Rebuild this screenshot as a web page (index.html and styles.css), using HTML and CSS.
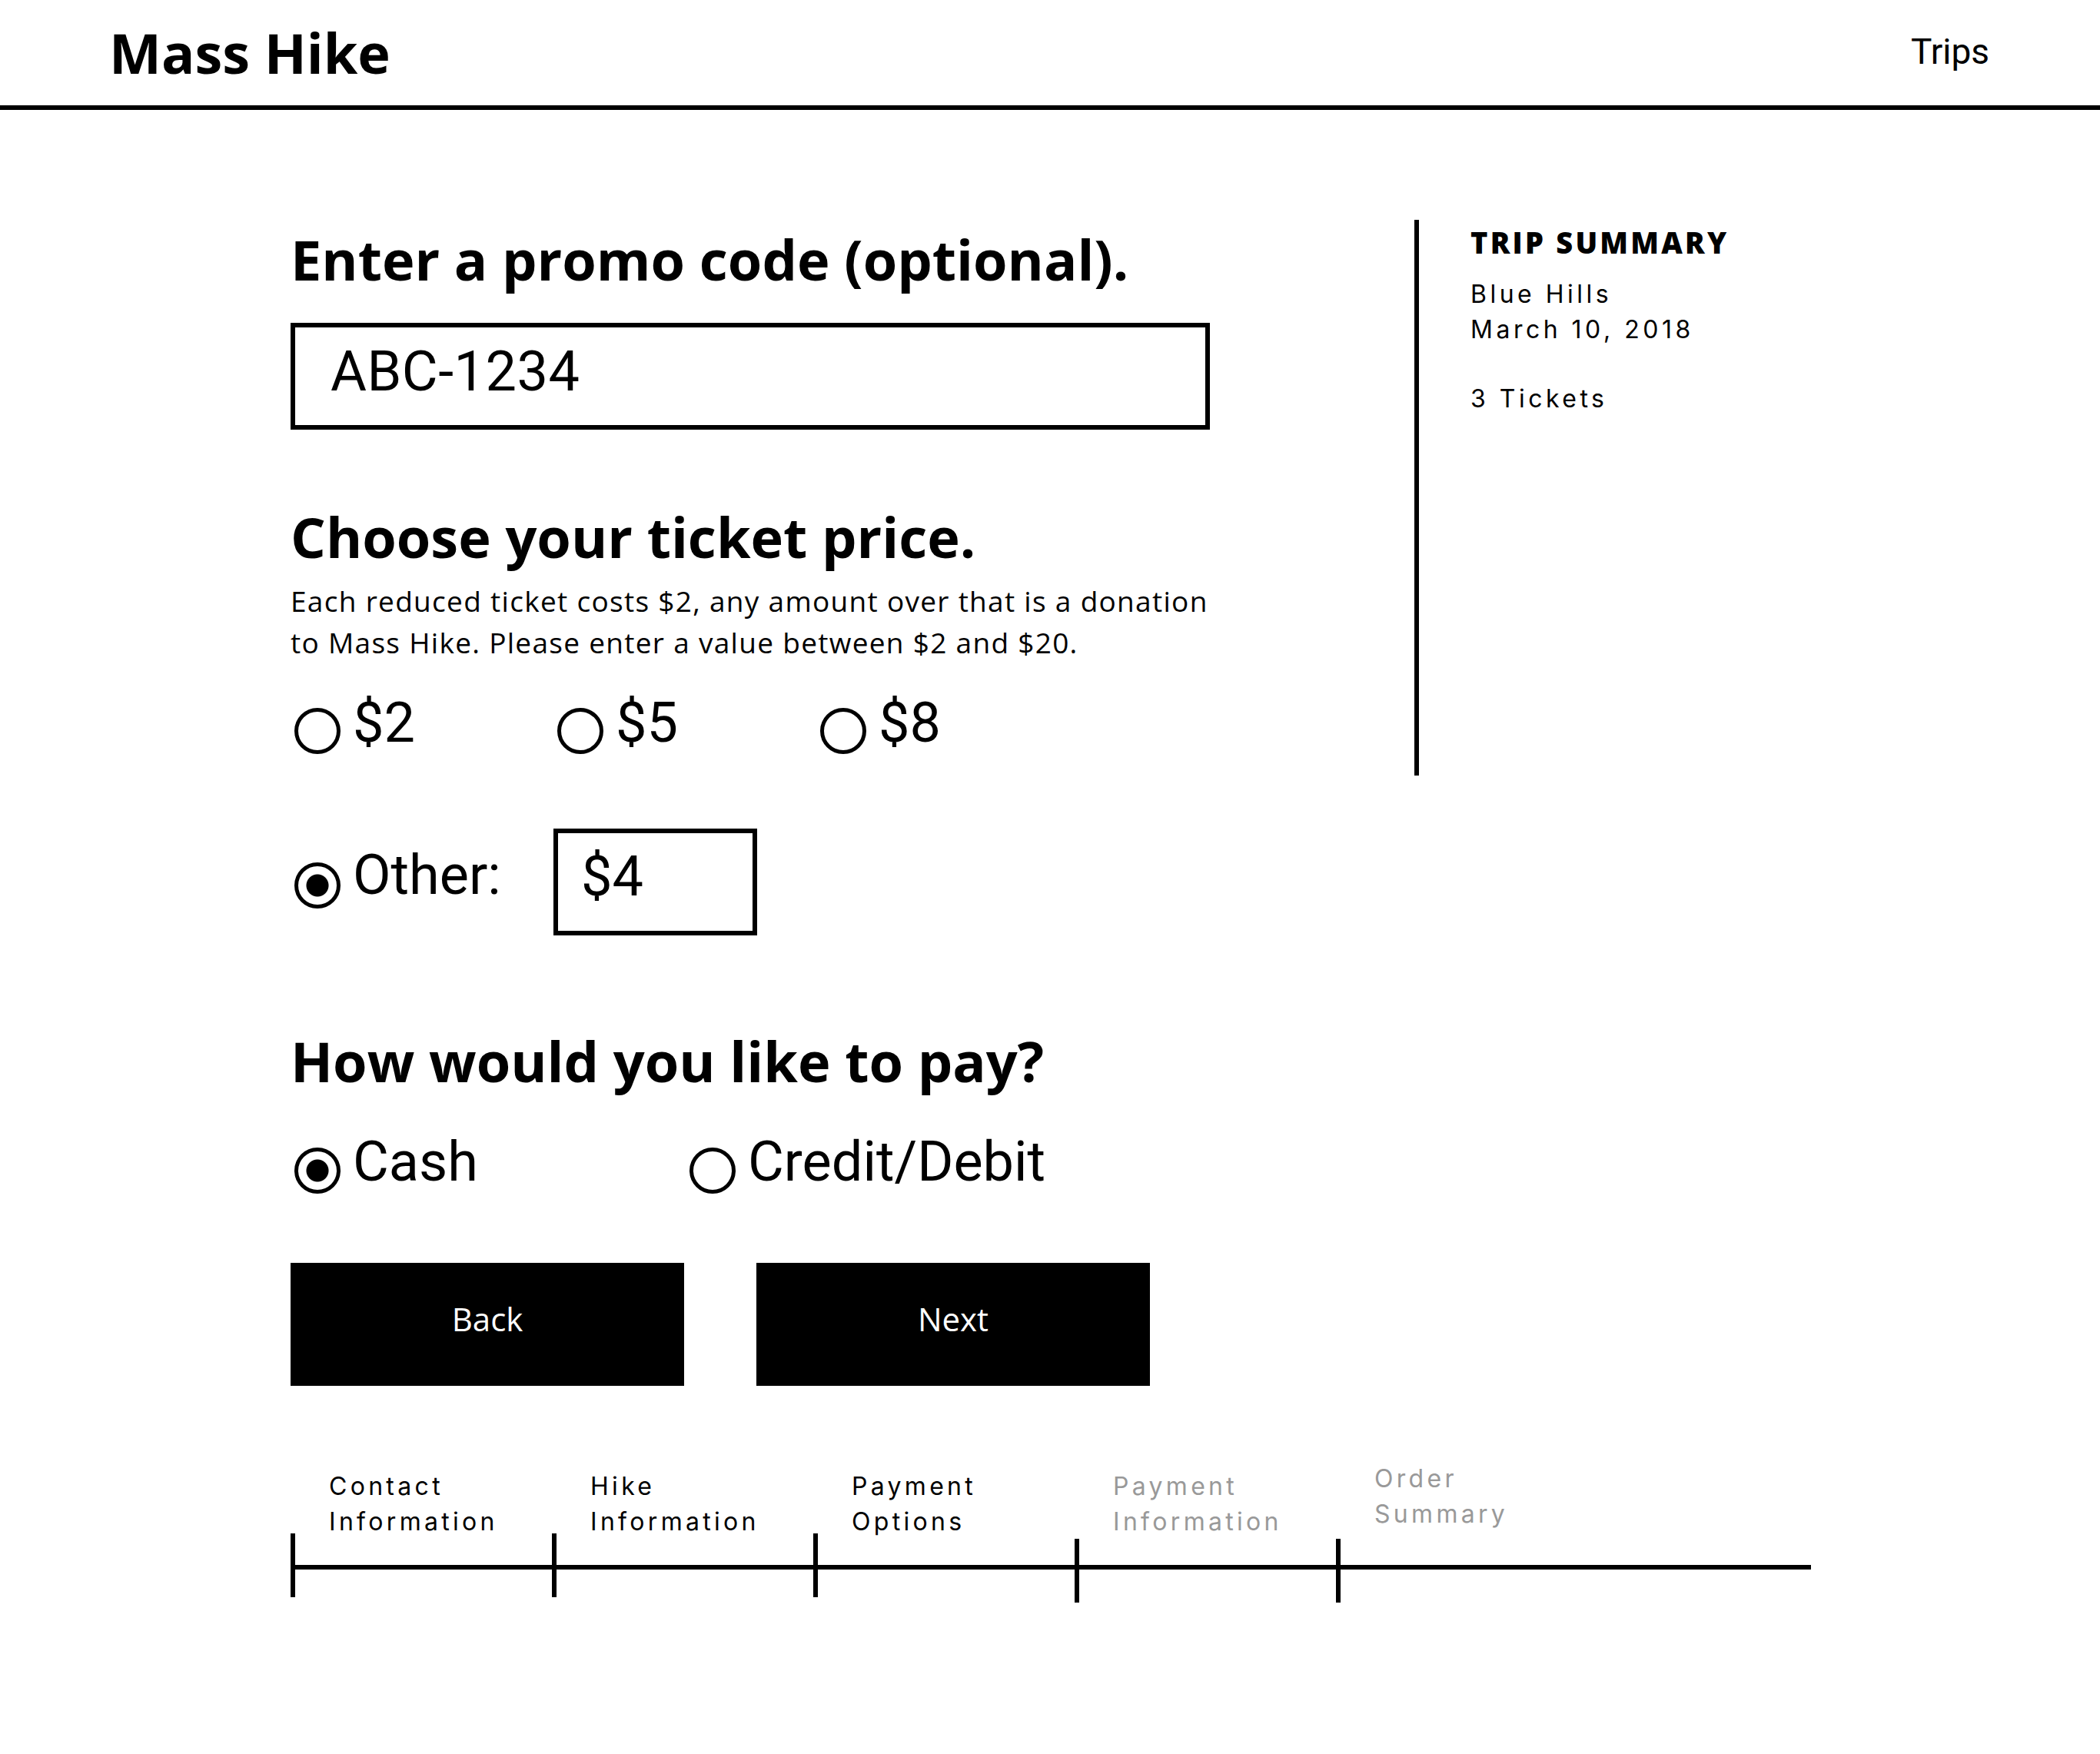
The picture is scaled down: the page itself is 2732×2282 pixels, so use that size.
FILE: index.html
```html
<!DOCTYPE html>
<html lang="en">
<head>
<meta charset="utf-8">
<title>Mass Hike – Payment Options</title>
<link rel="stylesheet" href="styles.css">
</head>
<body>
<header class="site-header">
  <div class="brand">Mass Hike</div>
  <a class="nav-link" href="#">Trips</a>
</header>

<main class="checkout">
  <div class="checkout-body">
    <form class="checkout-form">
      <h2 class="section-title section-title--first">Enter a promo code (optional).</h2>
      <input class="text-field text-field--promo" type="text" value="ABC-1234" aria-label="Promo code">

      <h2 class="section-title section-title--price">Choose your ticket price.</h2>
      <p class="hint">Each reduced ticket costs $2, any amount over that is a donation to Mass Hike. Please enter a value between $2 and $20.</p>

      <div class="choice-row choice-row--price">
        <label class="choice"><input type="radio" name="price"><span class="choice-text">$2</span></label>
        <label class="choice"><input type="radio" name="price"><span class="choice-text">$5</span></label>
        <label class="choice"><input type="radio" name="price"><span class="choice-text">$8</span></label>
      </div>

      <div class="choice-row choice-row--other">
        <label class="choice choice--other"><input type="radio" name="price" checked><span class="choice-text">Other:</span></label>
        <input class="text-field text-field--amount" type="text" value="$4" aria-label="Other amount">
      </div>

      <h2 class="section-title section-title--pay">How would you like to pay?</h2>

      <div class="choice-row choice-row--pay">
        <label class="choice choice--wide"><input type="radio" name="pay" checked><span class="choice-text">Cash</span></label>
        <label class="choice choice--wide"><input type="radio" name="pay"><span class="choice-text">Credit/Debit</span></label>
      </div>

      <div class="actions">
        <button type="button" class="btn">Back</button>
        <button type="button" class="btn">Next</button>
      </div>
    </form>

    <aside class="trip-summary">
      <h3 class="summary-title">TRIP SUMMARY</h3>
      <p class="summary-text">Blue Hills<br>March 10, 2018</p>
      <p class="summary-text summary-text--gap">3 Tickets</p>
    </aside>
  </div>

  <nav class="progress" aria-label="Checkout progress">
    <div class="step">
      <div class="step-label">Contact<br>Information</div>
      <div class="step-track"></div>
    </div>
    <div class="step">
      <div class="step-label">Hike<br>Information</div>
      <div class="step-track"></div>
    </div>
    <div class="step">
      <div class="step-label">Payment<br>Options</div>
      <div class="step-track"></div>
    </div>
    <div class="step step--upcoming">
      <div class="step-label">Payment<br>Information</div>
      <div class="step-track"></div>
    </div>
    <div class="step step--upcoming step--last">
      <div class="step-label step-label--raised">Order<br>Summary</div>
      <div class="step-track"></div>
    </div>
  </nav>
</main>
</body>
</html>
```

FILE: styles.css
```css
* {
  box-sizing: border-box;
}

html,
body {
  margin: 0;
  padding: 0;
  background: #fff;
}

body {
  width: 2732px;
  min-height: 2282px;
  color: #000;
  font-family: "Open Sans", sans-serif;
}

/* Header */
.site-header {
  display: flex;
  justify-content: space-between;
  align-items: flex-start;
  height: 143px;
  padding: 0 144px 0 142px;
  border-bottom: 6px solid #000;
}

.brand {
  margin-top: 19px;
  font: 700 72px/98px "Open Sans", sans-serif;
}

.nav-link {
  margin-top: 40px;
  font: 400 46px/54px Roboto, sans-serif;
  color: #000;
  text-decoration: none;
}

/* Layout */
.checkout {
  width: 1978px;
  margin-left: 378px;
  padding-top: 143px;
}

.checkout-body {
  display: flex;
  align-items: flex-start;
  gap: 266px;
}

.checkout-form {
  flex: 0 0 1196px;
  width: 1196px;
  min-width: 0;
  margin: 0;
}

/* Headings & text */
.section-title {
  margin: 0;
  font: 700 72px/86px "Open Sans", sans-serif;
}

.section-title--first {
  margin-top: 8px;
}

.section-title--price {
  margin-top: 96px;
}

.section-title--pay {
  margin-top: 120px;
}

.hint {
  width: 1225px;
  margin: 14px 0 0;
  font: 400 37px/54px "Open Sans", sans-serif;
  letter-spacing: 1.3px;
}

/* Fields */
.text-field {
  display: block;
  height: 139px;
  margin: 0;
  border: 6px solid #000;
  border-radius: 0;
  background: #fff;
  color: #000;
  font: 400 72px/72px Roboto, sans-serif;
  outline: none;
  appearance: none;
  -webkit-appearance: none;
}

.text-field--promo {
  width: 1196px;
  margin-top: 40px;
  padding: 21px 0 34px 46px;
  letter-spacing: 0.5px;
}

.text-field--amount {
  width: 265px;
  padding: 20px 0 35px 30px;
}

/* Radio choices */
.choice-row {
  display: flex;
  align-items: flex-start;
}

.choice-row--price {
  margin-top: 42px;
}

.choice-row--other {
  margin-top: 97px;
}

.choice-row--pay {
  margin-top: 53px;
}

.choice {
  display: flex;
  align-items: flex-start;
  gap: 16px;
  flex: 0 0 342px;
  padding-left: 5px;
  cursor: pointer;
}

.choice--wide {
  flex-basis: 514px;
}

.choice input {
  appearance: none;
  -webkit-appearance: none;
  flex: 0 0 60px;
  width: 60px;
  height: 60px;
  margin: 16px 0 0;
  border: 5px solid #000;
  border-radius: 50%;
  background: #fff;
}

.choice input:checked {
  background: radial-gradient(circle, #000 0 14px, #fff 15px);
}

.choice--other {
  margin-top: 25px;
}

.choice--other input {
  margin-top: 19px;
}

.choice-row--pay .choice input {
  margin-top: 17px;
}

.choice-text {
  font: 400 72px/72px Roboto, sans-serif;
  white-space: nowrap;
}

/* Buttons */
.actions {
  display: flex;
  gap: 94px;
  margin-top: 90px;
}

.btn {
  width: 512px;
  height: 160px;
  padding: 0 0 14px;
  border: 0;
  border-radius: 0;
  background: #000;
  color: #fff;
  font: 400 42px/56px "Open Sans", sans-serif;
  cursor: pointer;
}

/* Trip summary */
.trip-summary {
  flex: 0 0 516px;
  height: 723px;
  border-left: 6px solid #000;
  padding-left: 67px;
}

.summary-title {
  margin: 6px 0 0;
  font: 800 38px/46px "Open Sans", sans-serif;
  letter-spacing: 3.2px;
}

.summary-text {
  margin: 22px 0 0;
  font: 400 32px/46px Inter, sans-serif;
  letter-spacing: 4.5px;
}

.summary-text--gap {
  margin-top: 44px;
}

/* Progress */
.progress {
  display: flex;
  margin-top: 108px;
}

.step {
  flex: 0 0 340px;
}

.step--last {
  flex-basis: 618px;
}

.step-label {
  height: 84px;
  padding-left: 50px;
  font: 400 32px/46px Inter, sans-serif;
  letter-spacing: 4.3px;
  white-space: nowrap;
}

.step-label--raised {
  margin-top: -10px;
  margin-bottom: 10px;
}

.step--upcoming .step-label {
  color: #999;
}

.step-track {
  display: flow-root;
  height: 90px;
  background: linear-gradient(#000, #000) 0 41px / 100% 6px no-repeat;
}

.step-track::before {
  content: "";
  display: block;
  width: 6px;
  height: 83px;
  background: #000;
}

.step--upcoming .step-track::before {
  margin-top: 7px;
}
```
